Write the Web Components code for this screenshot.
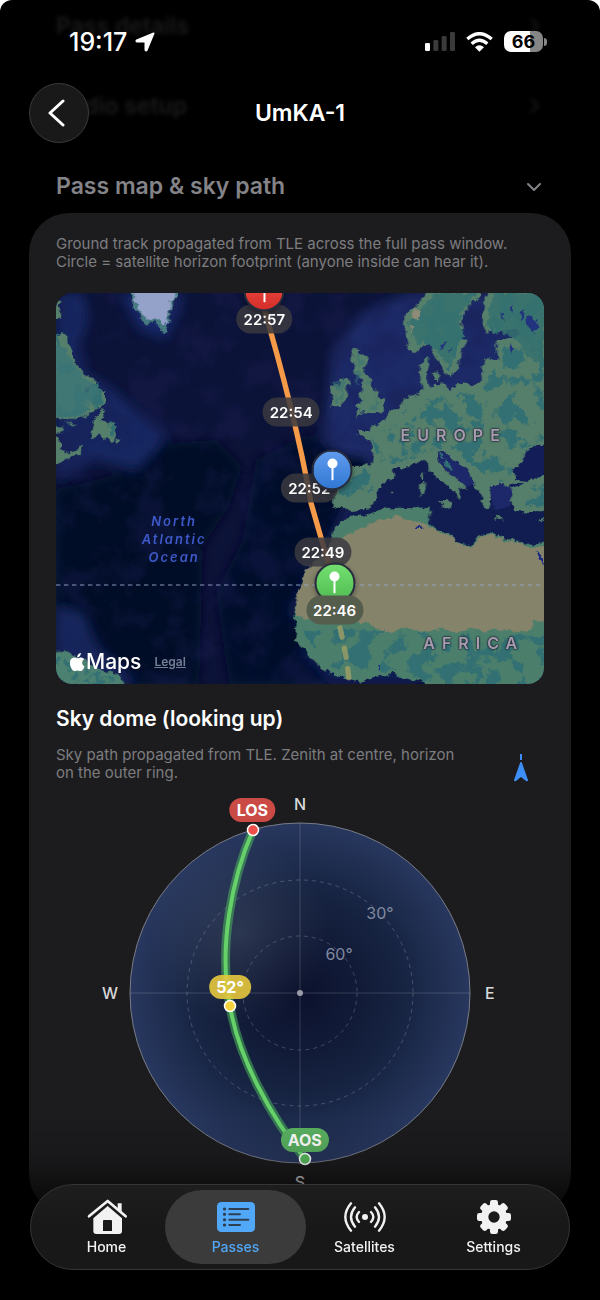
<!DOCTYPE html>
<html lang="en">
<head>
<meta charset="utf-8">
<meta name="viewport" content="width=device-width, initial-scale=1">
<title>UmKA-1</title>
<style>
  html { background: #fff; }
  body {
    margin: 0;
    color: #fff;
    font-family: Inter, "Liberation Sans", sans-serif;
    -webkit-font-smoothing: antialiased;
  }
</style>
</head>
<body>
<pass-screen>
  <status-bar slot="top" time="19:17" battery="66"></status-bar>
  <nav-header slot="top">UmKA-1</nav-header>

  <section-row dimmed>Pass details</section-row>
  <section-row dimmed>Radio setup</section-row>
  <section-row open>Pass map &amp; sky path</section-row>

  <pass-card>
    <caption-text>Ground track propagated from TLE across the full pass window. Circle = satellite horizon footprint (anyone inside can hear it).</caption-text>
    <pass-map></pass-map>
    <sky-intro>
      <span slot="title">Sky dome (looking up)</span>
      <caption-text>Sky path propagated from TLE. Zenith at centre, horizon on the outer ring.</caption-text>
    </sky-intro>
    <sky-dome></sky-dome>
  </pass-card>

  <tab-bar slot="bottom">
    <tab-item icon="home">Home</tab-item>
    <tab-item icon="passes" selected>Passes</tab-item>
    <tab-item icon="satellites">Satellites</tab-item>
    <tab-item icon="settings">Settings</tab-item>
  </tab-bar>
</pass-screen>

<script>
class BaseElement extends HTMLElement {
  constructor() {
    super();
    this.attachShadow({mode: 'open'});
  }

  connectedCallback() {
    this.shadowRoot.innerHTML = this.render();
  }
}

class PassScreen extends BaseElement {
  render() {
    return `
      <style>
        :host {
          display: block;
          position: relative;
          min-height: 100vh;
          background: #000;
          border-radius: 12px;
          overflow: hidden;
        }
        header {
          position: absolute;
          inset: 0 0 auto;
          z-index: 2;
        }
        main {
          display: flex;
          flex-direction: column;
          padding: 0 29px 84px;
        }
        .fade {
          position: fixed;
          inset: auto 0 0;
          height: 180px;
          background: linear-gradient(transparent, rgba(0, 0, 0, .12) 22%, rgba(0, 0, 0, .45) 36%, #000 65%);
          pointer-events: none;
        }
        footer {
          position: fixed;
          inset: auto 30px 30px;
          z-index: 2;
        }
      </style>
      <header><slot name="top"></slot></header>
      <main><slot></slot></main>
      <div class="fade"></div>
      <footer><slot name="bottom"></slot></footer>
    `;
  }
}

class StatusBar extends BaseElement {
  render() {
    return `
      <style>
        :host {
          display: flex;
          justify-content: space-between;
          align-items: center;
          height: 83px;
          padding: 0 53px 0 69px;
        }
        div { display: flex; align-items: center; }
        .clock { gap: 8px; font-size: 25px; font-weight: 500; }
        .icons { gap: 11px; }
        svg { display: block; }
        .battery {
          height: 21px;
          width: 39px;
          justify-content: center;
          border-radius: 7px;
          background: linear-gradient(90deg, #fff 66%, #868686 66%);
          color: #000;
          font-size: 18px;
          font-weight: 700;
        }
        .power { gap: 1px; }
        .tip { width: 3px; height: 8px; border-radius: 0 3px 3px 0; background: #868686; }
      </style>
      <div class="clock">
        <span>${this.getAttribute('time')}</span>
        <svg width="20" height="20" viewBox="0 0 60 60" fill="#fff" stroke="#fff" stroke-width="5" stroke-linejoin="round"><path d="M56 4L35 55Q33 58 31 54V31Q31 29 29 29H6Q2 28 5 25Z"/></svg>
      </div>
      <div class="icons">
        <svg width="30" height="19" viewBox="0 0 90 57" fill="#3a3a3a">
          <rect y="33" width="15" height="24" rx="4" fill="#fff"/>
          <rect x="25" y="24" width="15" height="33" rx="4"/>
          <rect x="50" y="12" width="15" height="45" rx="4"/>
          <rect x="75" width="15" height="57" rx="4"/>
        </svg>
        <svg width="27" height="20" viewBox="0 0 81 60" fill="none" stroke="#fff" stroke-width="10">
          <path d="M4 21Q40-11 77 21M17 35Q40 14 64 35"/>
          <path d="M27 46Q40 34 54 46L40 59Z" fill="#fff" stroke="none"/>
        </svg>
        <div class="power">
          <div class="battery">${this.getAttribute('battery')}</div>
          <div class="tip"></div>
        </div>
      </div>
    `;
  }
}

class NavHeader extends BaseElement {
  render() {
    return `
      <style>
        :host {
          display: grid;
          grid-template-columns: 60px 1fr 60px;
          align-items: center;
          padding: 0 29px;
        }
        button {
          display: grid;
          place-items: center;
          width: 60px;
          height: 60px;
          padding: 0;
          border: 1px solid #3b3b3b;
          border-radius: 50%;
          background: #191919;
        }
        h1 { margin: 0; font-size: 23px; font-weight: 600; text-align: center; }
      </style>
      <button type="button" aria-label="Back">
        <svg width="22" height="28" viewBox="0 0 22 28" fill="none" stroke="#fff" stroke-width="3" stroke-linecap="round" stroke-linejoin="round"><path d="M15 2L2 14L15 26"/></svg>
      </button>
      <h1><slot></slot></h1>
    `;
  }
}

class SectionRow extends BaseElement {
  render() {
    const isOpen = this.hasAttribute('open');
    const chevron = isOpen ? 'M2 6L8 12L14 6' : 'M6 2L12 8L6 14';
    return `
      <style>
        :host { display: block; height: 52px; margin-bottom: 28px; color: #838388; }
        :host([open]) { margin-bottom: 1px; }
        :host([dimmed]) { color: #1b1b1b; filter: blur(2px); }
        button {
          display: flex;
          justify-content: space-between;
          align-items: center;
          width: 100%;
          height: 100%;
          padding: 0 29px 0 27px;
          border: 0;
          background: none;
          color: inherit;
          font: 600 23px/28px Inter, "Liberation Sans", sans-serif;
        }
      </style>
      <button type="button" aria-expanded="${isOpen}">
        <slot></slot>
        <svg width="16" height="16" viewBox="0 0 16 16" fill="none" stroke="currentColor" stroke-width="2" stroke-linecap="round" stroke-linejoin="round"><path d="${chevron}"/></svg>
      </button>
    `;
  }
}

class PassCard extends BaseElement {
  render() {
    return `
      <style>
        :host {
          display: flex;
          flex-direction: column;
          padding: 22px 27px 20px;
          border-radius: 40px;
          background: #1c1c1e;
        }
      </style>
      <slot></slot>
    `;
  }
}

class CaptionText extends BaseElement {
  render() {
    return `
      <style>
        :host { display: block; color: #7d7d80; font-size: 15px; line-height: 18px; }
      </style>
      <slot></slot>
    `;
  }
}

class PassMap extends BaseElement {
  // Positions are percentages of the map's width and height
  static #times = [
    {x: 42.7, y: 6.6, text: '22:57'},
    {x: 48.2, y: 30.4, text: '22:54'},
    {x: 51.9, y: 49.9, text: '22:52'},
    {x: 54.7, y: 66.2, text: '22:49'}
  ];
  static #pins = [
    {x: 42.7, y: -.4, from: '#ee5149', to: '#d52e29'},
    {x: 56.6, y: 45.2, from: '#5f9bee', to: '#3178d3'},
    {x: 57.1, y: 74.1, from: '#74df70', to: '#4fbb51'}
  ];

  #time({x, y, text}) {
    return `<span class="time" style="left:${x}%;top:${y}%">${text}</span>`;
  }

  #pin({x, y, from, to}) {
    return `
      <span class="pin" style="left:${x}%;top:${y}%;background:linear-gradient(${from},${to})">
        <svg width="12" height="24" viewBox="0 0 12 24"><circle cx="6" cy="6" r="5" fill="#fff"/><path d="M5 10H7L7 22L6 23L5 22Z" fill="#fff"/></svg>
      </span>`;
  }

  render() {
    return `
      <style>
        :host {
          display: block;
          position: relative;
          margin-top: 22px;
          aspect-ratio: 488 / 391;
          border-radius: 16px;
          overflow: hidden;
          background: #0c1338;
        }
        .terrain { display: block; width: 100%; height: 100%; }
        .time, .pin, .label { position: absolute; transform: translate(-50%, -50%); }
        .time {
          padding: 0 7px;
          border-radius: 15px;
          background: rgba(58, 58, 64, .85);
          font-size: 15px;
          font-weight: 600;
          line-height: 29px;
        }
        .time.last { background: #555d4d; }
        .pin {
          display: grid;
          place-items: center;
          width: 37px;
          height: 37px;
          border: 2px solid #272d3d;
          border-radius: 50%;
          box-shadow: 0 2px 5px rgba(0, 0, 0, .4);
        }
        .label { text-align: center; font-weight: 600; }
        .land {
          color: #a79bb0;
          font-size: 16px;
          letter-spacing: 7px;
          text-shadow: 0 0 2px #222b35, 0 0 2px #222b35, 0 0 2px #222b35;
        }
        .sea { color: #3e59c9; font-size: 13px; line-height: 18px; font-style: italic; letter-spacing: 2px; }
        .credit {
          position: absolute;
          left: 14px;
          bottom: 10px;
          display: flex;
          align-items: center;
          gap: 1px;
          font-size: 21px;
          font-weight: 500;
          line-height: 24px;
        }
        a { margin-left: 12px; color: #747d93; font-size: 12px; font-weight: 600; }
      </style>
      <svg class="terrain" viewBox="0 0 1464 1173" preserveAspectRatio="none" aria-hidden="true">
        <defs>
          <filter id="soft" x="-20%" y="-20%" width="140%" height="140%"><feGaussianBlur stdDeviation="16"/></filter>
          <filter id="rough" x="0" y="0" width="100%" height="100%" color-interpolation-filters="sRGB">
            <feTurbulence type="fractalNoise" baseFrequency=".05" numOctaves="3" seed="4"/>
            <feDisplacementMap in="SourceGraphic" scale="22" xChannelSelector="R" yChannelSelector="G"/>
          </filter>
          <filter id="forest" x="0" y="0" width="100%" height="100%" color-interpolation-filters="sRGB">
            <feTurbulence type="fractalNoise" baseFrequency=".018" numOctaves="4" seed="9"/>
            <feColorMatrix values="0 0 0 0 .2  0 0 0 0 .44  0 0 0 0 .45  16 0 0 0 -8"/>
            <feComposite in2="SourceAlpha" operator="in"/>
          </filter>
          <filter id="seabed" x="0" y="0" width="100%" height="100%" color-interpolation-filters="sRGB">
            <feTurbulence type="fractalNoise" baseFrequency=".009" numOctaves="4" seed="21"/>
            <feColorMatrix values="0 0 0 0 .1  0 0 0 0 .12  0 0 0 0 .32  4 0 0 0 -1.8"/>
          </filter>
        </defs>
        <rect width="1464" height="1173" fill="#0c1338"/>
        <g filter="url(#soft)">
          <path d="M0 590L200 540 330 450 480 440 560 520 520 640 440 760 430 1173H0Z" fill="#020a28"/>
          <path d="M600 500L760 420 860 500 850 700 760 900 880 1173H520L480 900 560 740Z" fill="#040b2c"/>
          <path d="M0 0H80L100 70 70 160 90 240 160 280 240 350 330 420 310 460 240 530 120 500 0 560Z" fill="#192661"/>
          <path d="M190 0L250 110 330 140 370 60 380 0Z" fill="#182568"/>
          <path d="M830 170L920 60 1060 0H1464V620H1000L930 540 800 440Z" fill="#1b2968"/>
          <path d="M760 480L930 490 950 540 830 560Z" fill="#020a28"/>
          <path d="M830 720L880 620 1464 640V700L760 1000 700 960Z" fill="#152056"/>
          <path d="M0 940L80 960 120 1060 240 1173H0Z" fill="#16255c"/>
          <path d="M730 1060L820 1173H1150L1020 1120Z" fill="#111c52"/>
        </g>
        <rect width="1464" height="1173" filter="url(#seabed)" opacity=".4"/>

        <g filter="url(#rough)">
          <g fill="#557f6b">
            <g transform="translate(-18 -24)">
              <path d="M0 180L35 138 50 160 70 200 78 240 100 262 115 270 143 295 105 310 102 325 140 305 165 325 165 350 150 370 140 365 110 390 80 402 0 398Z"/>
              <path d="M155 372L165 375 148 408 165 405 175 418 200 415 192 425 198 450 190 472 175 460 160 462 150 452 118 458 130 430 135 405ZM195 462L212 458 205 475Z"/>
              <path d="M0 422L40 425 38 440 0 448ZM40 408L78 418 70 425ZM0 455L18 455 35 480 30 495 60 505 85 490 100 475 90 505 60 520 0 545ZM0 40L34 50 24 70 36 100 0 105Z"/>
            </g>
            <g transform="translate(732 -24)">
              <path d="M395 0L350 62 315 88 312 120 320 160 322 185 345 205 370 182 388 165 400 200 410 225 428 250 430 265 455 272 475 250 480 215 500 165 475 160 488 130 487 95 510 55 540 40 545 0Z"/>
              <path d="M572 0L552 50 548 115 555 142 585 143 640 132 665 148 612 162 585 168 590 190 592 225 575 228 560 215 545 240 545 290 528 300 490 292 445 315 432 295 405 300 395 310 375 305 355 325 330 332 310 345 300 365 265 380 258 400 235 420 212 425 208 438 172 438 178 450 200 460 215 480 220 510 213 545 225 720H750V0Z"/>
              <path d="M358 240L385 218 388 240 378 260 380 285 392 310 372 314 362 280 355 265ZM395 270L415 258 418 285 400 285Z"/>
              <path d="M165 188L180 192 175 210 205 215 195 245 188 262 208 270 215 300 235 325 238 340 258 340 252 365 250 382 215 385 190 382 160 398 180 375 165 362 185 348 178 330 190 315 182 300 190 285 170 270 160 268 165 240 150 235 155 205Z"/>
              <path d="M118 282L145 280 152 295 140 310 142 340 120 362 95 365 92 348 105 335 92 320 92 302 115 300Z"/>
            </g>
            <path d="M837 521L967 516 1000 560V640L932 648 887 654 862 641 832 648 837 576 847 536Z"/>
          </g>

          <g transform="translate(807 441)">
            <path d="M70 215L100 210 130 205 155 180 160 140 205 110 208 85 250 82 270 70 290 60 308 70 312 90 335 115 365 135 390 155 400 175 408 160 402 145 415 140 430 148 405 125 375 100 345 70 338 45 345 33 360 35 385 60 420 85 445 115 445 135 470 170 490 200 500 180 495 145 515 135 550 138 560 150 555 180 570 210 600 218 640 210 680 215V340H60Z" fill="#111c50"/>
            <path d="M338 45L345 33 360 35 385 60 420 85 445 115 445 135 425 140 405 125 375 100 345 70ZM495 145L515 135 550 138 560 150 555 200 510 210Z" fill="#1c2869"/>
            <path d="M568 115L565 90 590 70 600 35 630 15 680 20V100L640 112 600 125 575 122ZM550 138L560 128 595 130 560 145Z" fill="#131e58"/>
            <path d="M285 135L298 128 300 160 285 165ZM288 100L297 95 296 120 290 120ZM345 183L382 185 378 207 350 198ZM470 180L492 175 498 200 480 202ZM508 230L534 234 530 241 508 238ZM636 240L660 233 650 248ZM198 152L208 152 206 160 198 160Z" fill="#557f6b"/>
          </g>

          <g transform="translate(732 576)">
            <path d="M100 150L105 125 150 95 190 95 240 75 290 68 345 70 388 65 390 85 385 118 420 140 450 145 465 168 515 185 535 150 570 145 610 160 660 168 690 180 750 170V640H420L370 590 310 580 280 562 240 575 180 590 160 585 120 575 60 550 30 515 0 480-20 470-10 440-18 380 0 300 20 255 60 240 90 200Z" fill="#4c7f6b"/>
            <path d="M-18 380L0 300 20 255 100 165 160 140 230 110 290 92 340 108 385 122 420 145 450 150 465 172 515 190 540 155 570 150 610 164 660 172 690 190 750 180V412L700 405 690 435 640 440 600 430 550 440 510 430 470 445 430 430 380 440 330 430 255 442 200 415 130 412 0 400Z" fill="#86836b"/>
          </g>
          <path d="M-10 1080L30 1072 80 1096 110 1120 190 1146 215 1190H-10Z" fill="#4c8070"/>
          <g transform="translate(-18 -24)">
            <path d="M235 0L248 45 252 72 268 85 275 105 292 122 312 108 330 128 325 140 350 145 348 118 360 112 358 78 370 62 365 50 385 30 388 0Z" fill="#477a80"/>
            <path d="M243 0L258 60 278 90 290 108 316 96 345 125 352 112 352 78 364 62 358 50 378 30 380 0Z" fill="#94a2c9"/>
          </g>
        </g>
        <g filter="url(#rough)">
          <g filter="url(#forest)">
            <path d="M0 120L40 190 130 270 140 330 60 370H0ZM110 420L140 370 180 400 170 430Z"/>
            <path d="M1055 90L1140 0H1265L1220 130 1180 235 1150 200 1120 150 1085 165ZM1320 0H1464V440L1380 480 1370 540 1330 575 1280 540 1180 460 1150 470 1200 540 1110 480 1060 500 1010 510 970 500 940 430 1010 400 1060 330 1180 310 1290 280 1310 230 1340 220 1340 150 1300 110Z"/>
            <path d="M895 170L920 200 950 300 970 330 960 350 900 350ZM830 270L870 260 860 320 830 330Z" opacity=".5"/>
            <path d="M850 530L960 530 950 590 920 620 850 635ZM1390 590L1464 570V640H1400Z"/>
            <path d="M740 1010L860 1010 1464 1030V1173H1120L1020 1130 900 1150 800 1110Z"/>
            <path d="M0 1090L90 1120 190 1160 200 1173H0Z"/>
          </g>
          <path d="M1055 90L1140 0H1265L1215 60 1215 110 1180 220 1150 190 1120 140 1085 155ZM1310 0H1464V230L1420 190 1370 130 1290 100Z" fill="#36716f" opacity=".85"/>
          <path d="M0 140L40 190 80 250 130 290 80 370H0Z" fill="#3d7474" opacity=".85"/>
          <path d="M1075 45L1090 60 1085 80 1070 70ZM1060 90L1075 100 1068 120Z" fill="#8e8c76"/>
          <g transform="translate(732 -24)" fill="#22337f">
            <path d="M676 100L700 95 718 125 700 145 678 120ZM418 180L440 165 438 188 425 195ZM440 205L450 185 450 200ZM632 65L642 60 640 85ZM655 80L672 70 668 110ZM604 85L612 85 610 110ZM630 180L645 195 635 205Z"/>
          </g>
          <path d="M1440 772L1464 800V816L1450 800ZM1082 700L1096 700 1096 708 1084 708ZM964 1116H970V1132H964Z" fill="#1c2a84"/>
        </g>

        <path d="M0 876H1464" stroke="#9aa6cf" stroke-opacity=".45" stroke-width="6" stroke-dasharray="13 11"/>
        <path d="M612 5C655 150 722 380 765 630L834 870" stroke="#f49a48" stroke-width="16" fill="none"/>
        <path d="M852 1005C865 1060 875 1110 880 1173" stroke="#a6a264" stroke-opacity=".75" stroke-width="16" stroke-linecap="round" stroke-dasharray="28 34" fill="none"/>
      </svg>
      <span class="label land" style="left:81.5%;top:36.2%">EUROPE</span>
      <span class="label land" style="left:85.6%;top:89.5%">AFRICA</span>
      <span class="label sea" style="left:24.2%;top:63%">North<br>Atlantic<br>Ocean</span>
      ${PassMap.#times.map(this.#time).join('')}
      ${PassMap.#pins.map(this.#pin).join('')}
      <span class="time last" style="left:57.1%;top:81%">22:46</span>
      <div class="credit">
        <svg width="15" height="18" viewBox="3.5 1.5 16.5 20.5" fill="#fff" aria-label="Apple"><path d="M17.05 12.54c-.03-2.6 2.13-3.85 2.22-3.91-1.21-1.77-3.1-2.01-3.77-2.04-1.6-.16-3.13.94-3.94.94-.81 0-2.07-.92-3.4-.9-1.75.03-3.36 1.02-4.26 2.58-1.82 3.15-.46 7.82 1.3 10.38.86 1.25 1.9 2.66 3.25 2.61 1.3-.05 1.8-.84 3.37-.84s2.02.84 3.4.82c1.4-.03 2.3-1.28 3.15-2.54.99-1.45 1.4-2.86 1.42-2.93-.03-.02-2.73-1.05-2.76-4.16zM14.47 4.9c.72-.87 1.2-2.08 1.07-3.28-1.03.04-2.28.69-3.02 1.55-.66.77-1.24 2-1.09 3.18 1.15.09 2.33-.58 3.04-1.45z"/></svg>
        <span>Maps</span>
        <a href="#legal">Legal</a>
      </div>
    `;
  }
}

class SkyIntro extends BaseElement {
  render() {
    return `
      <style>
        :host { display: block; margin-top: 21px; }
        h2 { margin: 0 0 13px; font-size: 21px; font-weight: 600; line-height: 28px; }
        div { display: flex; align-items: center; justify-content: space-between; gap: 16px; }
        ::slotted(caption-text) { flex: 0 1 420px; }
        svg { flex: none; margin: 8px 15px 0 0; }
      </style>
      <h2><slot name="title"></slot></h2>
      <div>
        <slot></slot>
        <svg width="16" height="28" viewBox="0 0 16 28" fill="#3d8ef7" role="img" aria-label="Heading north"><rect x="7" width="2" height="6"/><path d="M8 8Q9 8 9 9L15 26Q15 28 13 27L8 23L3 27Q1 28 1 26L7 9Q7 8 8 8Z"/></svg>
      </div>
    `;
  }
}

class SkyDome extends BaseElement {
  render() {
    return `
      <style>
        :host {
          display: grid;
          grid-template: auto auto auto / 1fr minmax(0, 340px) 1fr;
          align-items: center;
          justify-items: center;
          row-gap: 7px;
          margin-top: 10px;
          color: #d8d8da;
          font-size: 16px;
          font-weight: 500;
          line-height: 24px;
        }
        .n, .s { grid-column: 1 / -1; }
        .w { justify-self: end; margin-right: 12px; }
        .e { justify-self: start; margin-left: 15px; }
        .dome { position: relative; width: 100%; }
        svg { display: block; width: 100%; overflow: visible; }
        .dome span { position: absolute; transform: translate(-50%, -50%); }
        .ring { color: #8089a0; font-weight: 400; }
        .tag {
          padding: 0 7px;
          border-radius: 12px;
          color: #fff;
          font-weight: 700;
        }
      </style>
      <span class="n">N</span>
      <span class="w">W</span>
      <div class="dome">
        <svg viewBox="0 0 340 340" aria-hidden="true">
          <defs>
            <radialGradient id="sky">
              <stop stop-color="#0b112c"/>
              <stop offset=".6" stop-color="#162341"/>
              <stop offset="1" stop-color="#28375e"/>
            </radialGradient>
            <radialGradient id="glow" cx="110" cy="110" r="92" gradientUnits="userSpaceOnUse">
              <stop stop-color="#fff" stop-opacity=".1"/>
              <stop offset="1" stop-color="#fff" stop-opacity="0"/>
            </radialGradient>
          </defs>
          <circle cx="170" cy="170" r="170" fill="url(#sky)"/>
          <circle cx="170" cy="170" r="170" fill="url(#glow)" stroke="#777c89"/>
          <path d="M170 0V340M0 170H340" stroke="#fff" stroke-opacity=".16"/>
          <g fill="none" stroke="#fff" stroke-opacity=".2" stroke-dasharray="4 4">
            <circle cx="170" cy="170" r="57"/>
            <circle cx="170" cy="170" r="113"/>
          </g>
          <circle cx="170" cy="170" r="3" fill="#9a9da8"/>
          <g fill="none" stroke-linecap="round">
            <path d="M123 7C102 55 88 125 100 183C108 233 140 293 175 336" stroke="#4fbf5d" stroke-opacity=".5" stroke-width="9"/>
            <path d="M123 7C102 55 88 125 100 183C108 233 140 293 175 336" stroke="#66d169" stroke-width="4"/>
          </g>
          <g stroke="#fff" stroke-width="1.5">
            <circle cx="123" cy="7" r="5.5" fill="#ee4f49"/>
            <circle cx="100" cy="183" r="5.5" fill="#f5d33f"/>
            <circle cx="175" cy="336" r="5.5" fill="#57b95b"/>
          </g>
        </svg>
        <span class="ring" style="left:73.5%;top:26.5%">30°</span>
        <span class="ring" style="left:61.5%;top:38.5%">60°</span>
        <span class="tag" style="left:36%;top:-3.8%;background:#ca4a46">LOS</span>
        <span class="tag" style="left:29.4%;top:48.2%;background:rgba(226,196,61,.92)">52°</span>
        <span class="tag" style="left:51.4%;top:93.1%;background:#59b060">AOS</span>
      </div>
      <span class="e">E</span>
      <span class="s">S</span>
    `;
  }
}

class TabBar extends BaseElement {
  render() {
    return `
      <style>
        :host { display: block; }
        nav {
          display: grid;
          grid-template-columns: repeat(4, 1fr);
          padding: 5px 11px;
          border: 1px solid #353536;
          border-radius: 43px;
          background: linear-gradient(#1e1e1f, #181818 50%);
        }
      </style>
      <nav aria-label="Main"><slot></slot></nav>
    `;
  }
}

class TabItem extends BaseElement {
  static #tooth = [0, 45, 90, 135, 180, 225, 270, 315]
    .map(angle => `<rect x="-12" y="-51" width="24" height="24" rx="7" transform="rotate(${angle})"/>`)
    .join('');

  // Every icon is drawn round its own centre
  static #icons = {
    home: `
      <path d="M-54-2L2-48L56-2" fill="none" stroke="currentColor" stroke-width="8" stroke-linecap="round" stroke-linejoin="round"/>
      <path d="M32-41H44V-10L32-20Z"/>
      <path fill-rule="evenodd" d="M2-33L45 4V42Q45 51 36 51H-32Q-41 51-41 42V4ZM-12 12Q-12 9-9 9H12Q15 9 15 12V42H-12Z"/>`,
    passes: `
      <rect x="-57" y="-45" width="114" height="90" rx="13"/>
      <g stroke="#2f3f52" stroke-width="6" stroke-linecap="round">
        <path d="M-20-24H37M-20-8H12M-20 8H37M-20 24H12"/>
        <path d="M-35-24H-34M-35-8H-34M-35 8H-34M-35 24H-34" stroke-width="9"/>
      </g>`,
    satellites: `
      <circle r="9"/>
      <g fill="none" stroke="currentColor" stroke-width="7" stroke-linecap="round">
        <path d="M-42-41Q-76 0-42 41M-30-29Q-54 0-30 29M-18-15Q-32 0-18 15"/>
        <path d="M42-41Q76 0 42 41M30-29Q54 0 30 29M18-15Q32 0 18 15"/>
      </g>`,
    settings: `
      <circle r="28" fill="none" stroke="currentColor" stroke-width="22"/>
      ${TabItem.#tooth}`
  };

  render() {
    const name = this.getAttribute('icon');
    const current = this.hasAttribute('selected') ? 'aria-current="page"' : '';
    return `
      <style>
        :host { display: block; color: #f2f2f2; }
        :host([selected]) { color: #52a8f8; margin: 0 -6px; }
        a {
          display: flex;
          flex-direction: column;
          align-items: center;
          gap: 3px;
          padding: 9px 0 8px;
          border-radius: 37px;
          color: inherit;
          font-size: 14px;
          font-weight: 500;
          line-height: 18px;
          text-decoration: none;
        }
        :host([selected]) a { background: #3b3b3b; }
      </style>
      <a href="#${name}" ${current}>
        <svg width="44" height="36" viewBox="-66 -54 132 108" fill="currentColor" aria-hidden="true">${TabItem.#icons[name]}</svg>
        <slot></slot>
      </a>
    `;
  }
}

window.customElements.define('pass-screen', PassScreen);
window.customElements.define('status-bar', StatusBar);
window.customElements.define('nav-header', NavHeader);
window.customElements.define('section-row', SectionRow);
window.customElements.define('pass-card', PassCard);
window.customElements.define('caption-text', CaptionText);
window.customElements.define('pass-map', PassMap);
window.customElements.define('sky-intro', SkyIntro);
window.customElements.define('sky-dome', SkyDome);
window.customElements.define('tab-bar', TabBar);
window.customElements.define('tab-item', TabItem);
</script>
</body>
</html>
